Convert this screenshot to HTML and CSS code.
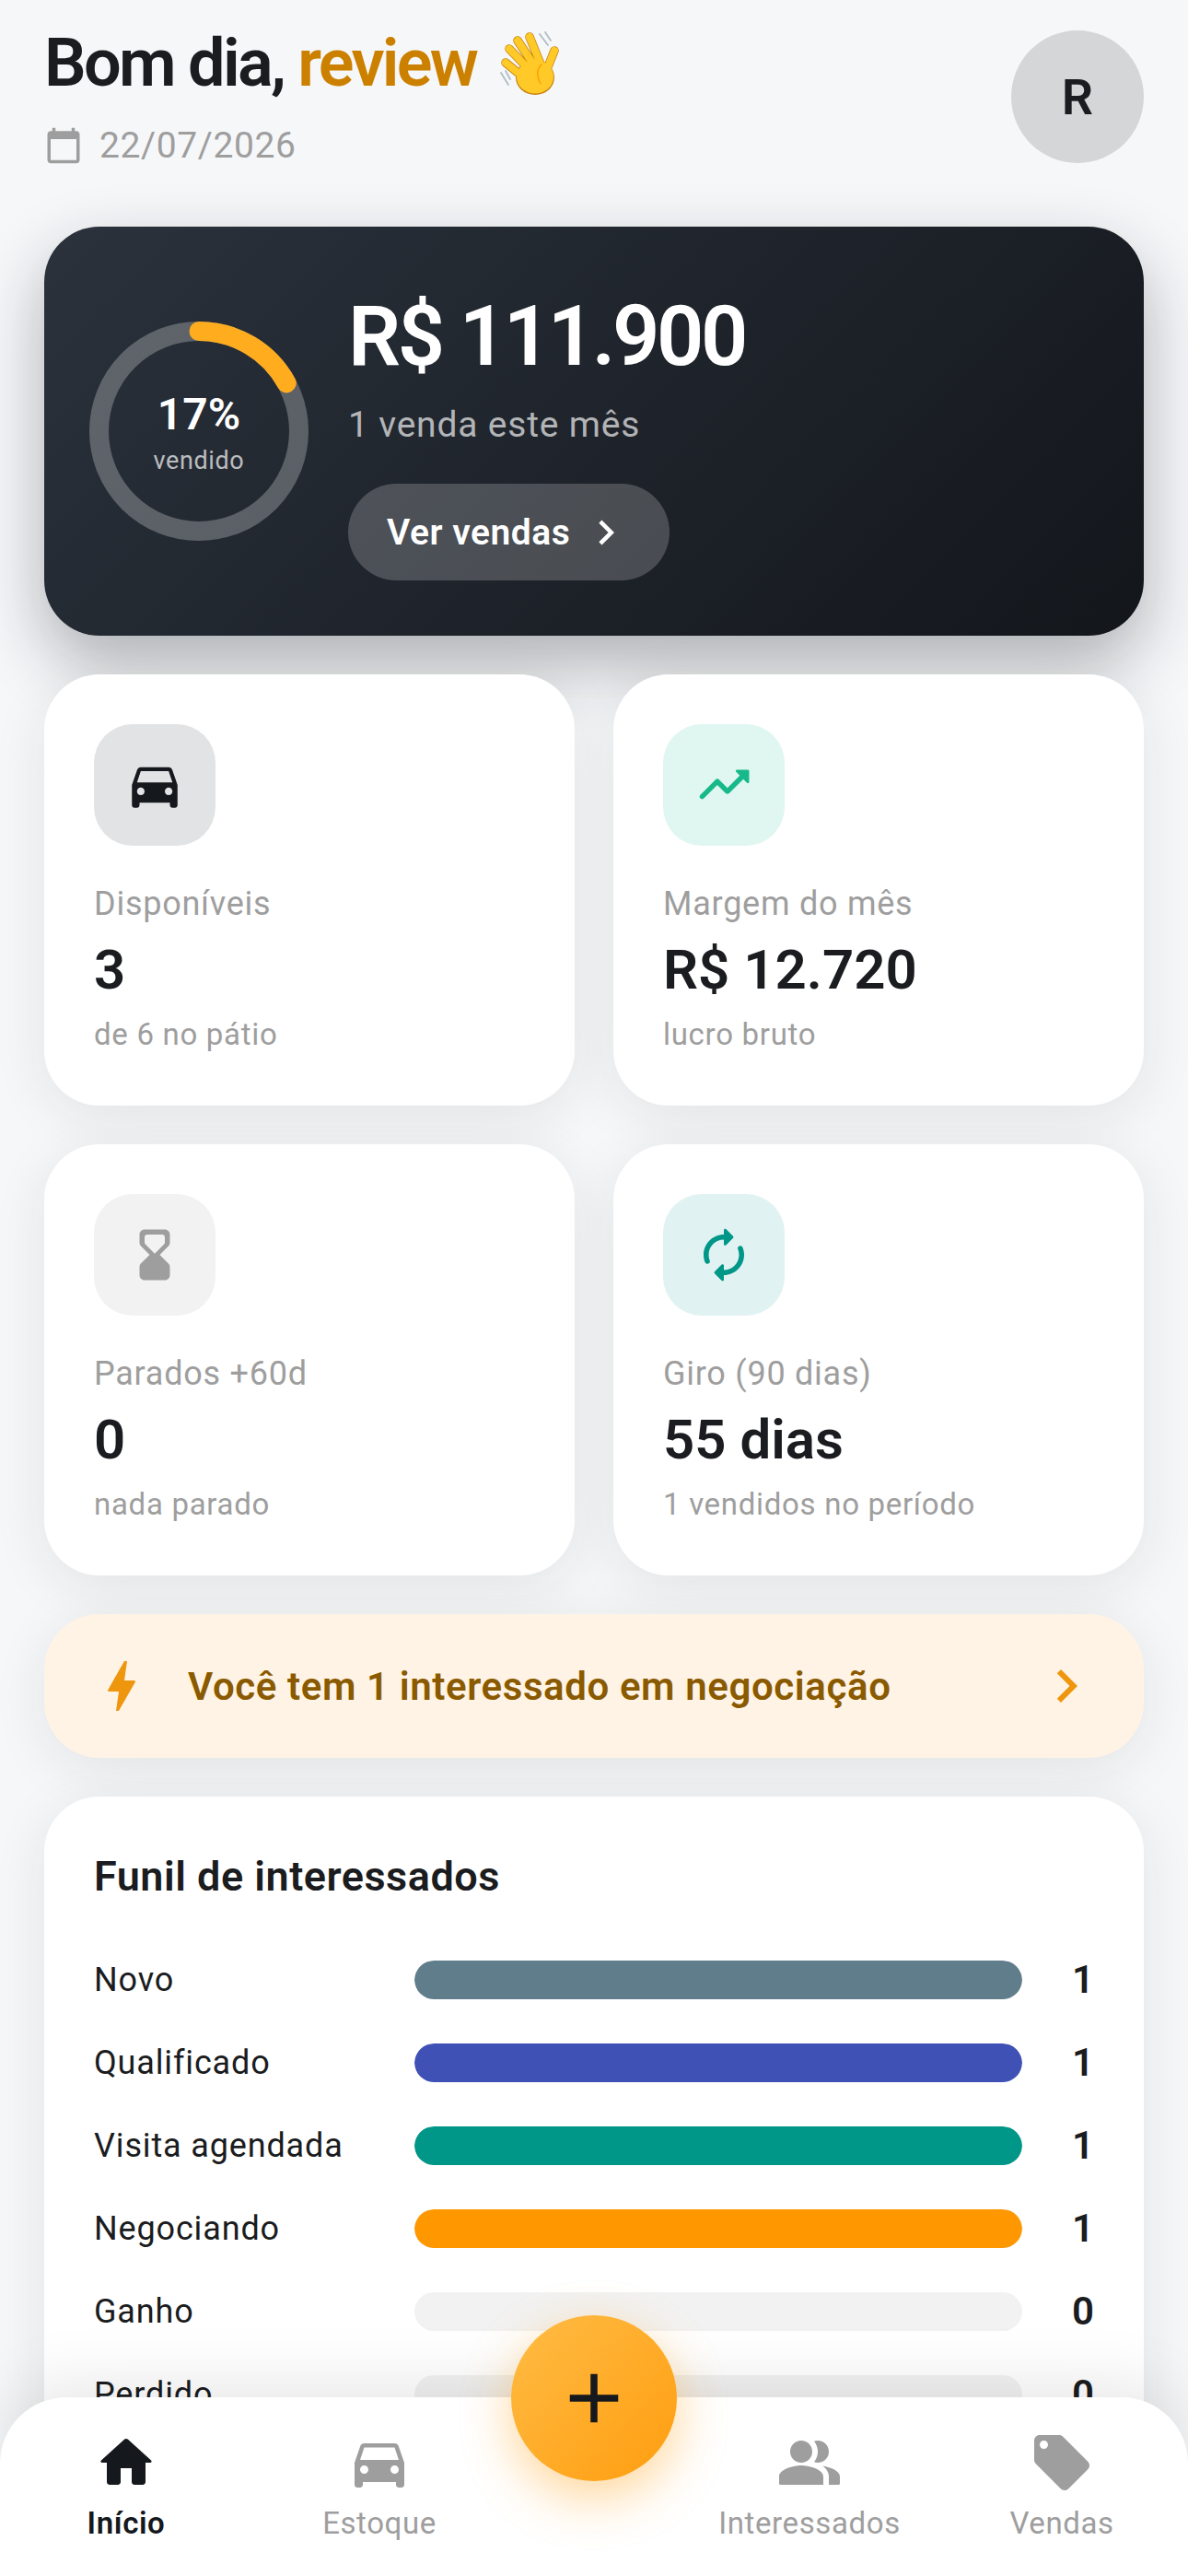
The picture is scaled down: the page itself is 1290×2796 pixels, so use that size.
FILE: index.html
```html
<!DOCTYPE html>
<html lang="pt-BR">
<head>
<meta charset="utf-8">
<title>Início</title>
<link rel="stylesheet" href="styles.css">
</head>
<body>
<div class="screen">
  <main class="content">
    <header class="top">
      <div>
        <h1 class="greet">Bom dia, <span class="greet-name">review</span> <svg class="wave" viewBox="0 0 65 69"><g fill="none" stroke-linecap="round"><g stroke="#C77F0A" stroke-width="9.5"><path d="M33 6 46 38M20 10 40 40M11 19 36 45M7 34 29 52M60 21 50 46"/></g><ellipse cx="39" cy="50" rx="21" ry="19" fill="#C77F0A"/><g stroke="#FFCA28" stroke-width="8"><path d="M33 6 46 38M20 10 40 40M11 19 36 45M7 34 29 52M60 21 50 46"/></g><ellipse cx="39" cy="49.500" rx="20" ry="18" fill="#FFCA28"/><path d="M44 3 53 15M50 1 56 10M2 45 10 58M7 43 12 52" stroke="#B0BEC5" stroke-width="1.800"/><path d="M46 36Q38 44 45 57" stroke="#FFA000" stroke-width="1.500"/></g></svg></h1>
        <div class="date">
          <svg class="ic-date" viewBox="0 0 24 24"><path d="M20 3h-1V1h-2v2H7V1H5v2H4c-1.100 0-2 .9-2 2v16c0 1.100.9 2 2 2h16c1.100 0 2-.9 2-2V5c0-1.100-.9-2-2-2zm0 18H4V8h16v13z"/></svg>
          <span>22/07/2026</span>
        </div>
      </div>
      <div class="avatar">R</div>
    </header>

    <section class="hero">
      <div class="ring">
        <svg class="ring-svg" viewBox="0 0 240 240">
          <circle class="ring-track" cx="120" cy="120" r="108.500"/>
          <circle class="ring-value" cx="120" cy="120" r="108.500" stroke-dasharray="115.900 681.700" transform="rotate(-90 120 120)"/>
        </svg>
        <div class="ring-label">
          <div class="ring-pct">17%</div>
          <div class="ring-sub">vendido</div>
        </div>
      </div>
      <div class="hero-body">
        <div class="hero-amount">R$ 111.900</div>
        <div class="hero-sub">1 venda este mês</div>
        <div class="hero-btn">
          <span>Ver vendas</span>
          <svg class="ic-chev-sm" viewBox="0 0 24 24"><path d="M10 6 8.590 7.410 13.170 12l-4.580 4.590L10 18l6-6z"/></svg>
        </div>
      </div>
    </section>

    <section class="stats">
      <article class="card">
        <div class="icon-box box-dark"><svg class="ic" viewBox="0 0 24 24"><path fill="#15181D" d="M18.920 6.010C18.720 5.420 18.160 5 17.500 5h-11c-.66 0-1.210.42-1.420 1.010L3 12v8c0 .55.45 1 1 1h1c.55 0 1-.45 1-1v-1h12v1c0 .55.45 1 1 1h1c.55 0 1-.45 1-1v-8l-2.080-5.990zM6.500 16c-.83 0-1.500-.67-1.500-1.500S5.670 13 6.500 13s1.500.67 1.500 1.500S7.330 16 6.500 16zm11 0c-.83 0-1.500-.67-1.500-1.500s.67-1.500 1.500-1.500 1.500.67 1.500 1.500-.67 1.500-1.500 1.500zM5 11l1.500-4.500h11L19 11H5z"/></svg></div>
        <div class="card-label">Disponíveis</div>
        <div class="card-value">3</div>
        <div class="card-sub">de 6 no pátio</div>
      </article>
      <article class="card">
        <div class="icon-box box-green"><svg class="ic" viewBox="0 0 24 24"><path fill="#17B98A" d="M16.850 6.850l1.440 1.440-4.880 4.880-3.290-3.290c-.39-.39-1.020-.39-1.410 0l-6 6.010c-.39.39-.39 1.020 0 1.410.39.39 1.020.39 1.410 0L9.410 12l3.290 3.290c.39.39 1.020.39 1.410 0l5.590-5.580 1.440 1.440c.31.31.85.09.85-.35V6.500c.01-.28-.21-.5-.49-.5h-4.290c-.45 0-.67.54-.36.85z"/></svg></div>
        <div class="card-label">Margem do mês</div>
        <div class="card-value">R$ 12.720</div>
        <div class="card-sub">lucro bruto</div>
      </article>
      <article class="card">
        <div class="icon-box box-grey"><svg class="ic" viewBox="0 0 24 24"><path fill="#9E9E9E" d="M16 22c1.100 0 2-.9 2-2l-.01-3.180c0-.53-.21-1.030-.58-1.410L14 12l3.410-3.430c.37-.37.58-.88.58-1.410L18 4c0-1.100-.9-2-2-2H8c-1.100 0-2 .9-2 2v3.160c0 .53.21 1.040.58 1.420L10 12l-3.410 3.400c-.38.38-.59.89-.59 1.420V20c0 1.100.9 2 2 2h8zM8 7.090V5c0-.55.45-1 1-1h6c.55 0 1 .45 1 1v2.090c0 .27-.11.52-.29.71L12 11.500 8.290 7.790c-.18-.18-.29-.44-.29-.7z"/></svg></div>
        <div class="card-label">Parados +60d</div>
        <div class="card-value">0</div>
        <div class="card-sub">nada parado</div>
      </article>
      <article class="card">
        <div class="icon-box box-teal"><svg class="ic" viewBox="0 0 24 24"><path fill="#009688" d="M12 6v1.790c0 .45.54.67.85.35l2.790-2.790c.2-.2.2-.51 0-.71l-2.790-2.790c-.31-.31-.85-.09-.85.36V4c-4.420 0-8 3.580-8 8 0 1.040.2 2.040.57 2.950.27.67 1.130.85 1.640.34.27-.27.38-.68.23-1.040C6.150 13.560 6 12.790 6 12c0-3.310 2.690-6 6-6zm5.790 2.710c-.27.27-.38.69-.23 1.040.28.7.44 1.460.44 2.250 0 3.310-2.690 6-6 6v-1.790c0-.45-.54-.67-.85-.35l-2.790 2.790c-.2.2-.2.51 0 .71l2.790 2.790c.31.31.85.09.85-.35V20c4.420 0 8-3.580 8-8 0-1.040-.2-2.040-.57-2.950-.27-.67-1.130-.85-1.640-.34z"/></svg></div>
        <div class="card-label">Giro (90 dias)</div>
        <div class="card-value">55 dias</div>
        <div class="card-sub">1 vendidos no período</div>
      </article>
    </section>

    <section class="banner">
      <svg class="ic-banner" viewBox="0 0 24 24"><path fill="#ED960E" d="M11 21h-1l1-7H7.500c-.58 0-.57-.32-.38-.66.19-.34.05-.08.07-.12C8.480 10.940 10.420 7.540 13 3h1l-1 7h3.500c.49 0 .56.33.47.51l-.07.15C12.960 17.550 11 21 11 21z"/></svg>
      <span class="banner-text">Você tem 1 interessado em negociação</span>
      <svg class="ic-banner" viewBox="0 0 24 24"><path fill="#ED960E" d="M10 6 8.590 7.410 13.170 12l-4.580 4.590L10 18l6-6z"/></svg>
    </section>

    <section class="funnel">
      <h2 class="funnel-title">Funil de interessados</h2>
      <div class="funnel-rows">
        <div class="f-row"><span class="f-label">Novo</span><div class="f-track"><div class="f-bar bar-slate"></div></div><span class="f-num">1</span></div>
        <div class="f-row"><span class="f-label">Qualificado</span><div class="f-track"><div class="f-bar bar-indigo"></div></div><span class="f-num">1</span></div>
        <div class="f-row"><span class="f-label">Visita agendada</span><div class="f-track"><div class="f-bar bar-teal"></div></div><span class="f-num">1</span></div>
        <div class="f-row"><span class="f-label">Negociando</span><div class="f-track"><div class="f-bar bar-orange"></div></div><span class="f-num">1</span></div>
        <div class="f-row"><span class="f-label">Ganho</span><div class="f-track"></div><span class="f-num">0</span></div>
        <div class="f-row"><span class="f-label">Perdido</span><div class="f-track"></div><span class="f-num">0</span></div>
      </div>
    </section>
  </main>

  <nav class="nav">
    <div class="nav-item nav-active">
      <svg class="ic-nav" viewBox="0 0 24 24"><path d="M10 19v-5h4v5c0 .55.45 1 1 1h3c.55 0 1-.45 1-1v-7h1.700c.46 0 .68-.57.33-.87L12.670 3.600c-.38-.34-.96-.34-1.340 0l-8.360 7.530c-.34.3-.13.87.33.87H5v7c0 .55.45 1 1 1h3c.55 0 1-.45 1-1z"/></svg>
      <span>Início</span>
    </div>
    <div class="nav-item">
      <svg class="ic-nav" viewBox="0 0 24 24"><path d="M18.920 6.010C18.720 5.420 18.160 5 17.500 5h-11c-.66 0-1.210.42-1.420 1.010L3 12v8c0 .55.45 1 1 1h1c.55 0 1-.45 1-1v-1h12v1c0 .55.45 1 1 1h1c.55 0 1-.45 1-1v-8l-2.080-5.990zM6.500 16c-.83 0-1.500-.67-1.500-1.500S5.670 13 6.500 13s1.500.67 1.500 1.500S7.330 16 6.500 16zm11 0c-.83 0-1.500-.67-1.500-1.500s.67-1.500 1.500-1.500 1.500.67 1.500 1.500-.67 1.500-1.500 1.500zM5 11l1.500-4.500h11L19 11H5z"/></svg>
      <span>Estoque</span>
    </div>
    <div class="nav-gap"></div>
    <div class="nav-item">
      <svg class="ic-nav" viewBox="0 0 24 24"><path d="M16.670 13.130C18.040 14.060 19 15.320 19 17v3h3.500c.28 0 .5-.22.5-.5V17c0-2.180-3.570-3.470-6.330-3.870zM15 12c2.210 0 4-1.790 4-4s-1.790-4-4-4c-.47 0-.91.1-1.330.24C14.500 5.270 15 6.580 15 8s-.5 2.730-1.330 3.760c.42.14.86.24 1.330.24zM9 12c2.210 0 4-1.790 4-4s-1.790-4-4-4-4 1.790-4 4 1.790 4 4 4zM9 13c-2.670 0-8 1.340-8 4v2.500c0 .28.22.5.5.5H17v-3c0-2.660-5.330-4-8-4z"/></svg>
      <span>Interessados</span>
    </div>
    <div class="nav-item">
      <svg class="ic-nav" viewBox="0 0 24 24"><path d="M21.410 11.580l-9-9C12.050 2.220 11.550 2 11 2H4c-1.100 0-2 .9-2 2v7c0 .55.22 1.050.59 1.420l9 9c.36.36.86.58 1.410.58s1.050-.22 1.410-.59l7-7c.37-.36.59-.86.59-1.410s-.23-1.060-.59-1.420zM5.500 7C4.670 7 4 6.330 4 5.500S4.670 4 5.500 4 7 4.670 7 5.500 6.330 7 5.500 7z"/></svg>
      <span>Vendas</span>
    </div>
    <div class="fab"><svg class="ic-fab" viewBox="0 0 24 24"><path d="M19 13h-6v6h-2v-6H5v-2h6V5h2v6h6v2z"/></svg></div>
  </nav>
</div>
</body>
</html>
```
FILE: styles.css
```css
* { box-sizing: border-box; margin: 0; padding: 0; }
html, body { width: 1290px; height: 2796px; overflow: hidden; }
body { font-family: Roboto, "Noto Sans", sans-serif; color: #1A1C20; background: #F6F7F9; }
.screen { position: relative; width: 1290px; height: 2796px; overflow: hidden; }
.content { padding: 33px 48px 0; display: flex; flex-direction: column; }

.top { display: flex; justify-content: space-between; align-items: flex-start; height: 213px; }
.greet { font-size: 72px; line-height: 72px; font-weight: 600; letter-spacing: -2.7px; }
.greet-name { color: #CC8000; }
.wave { width: 65px; height: 69px; vertical-align: -10px; margin-left: 9px; }
.date { display: flex; align-items: center; gap: 18px; margin-top: 32px; font-size: 39px; line-height: 42px; color: #9E9E9E; letter-spacing: 0.6px; }
.ic-date { width: 42px; height: 42px; fill: #9E9E9E; }
.avatar { width: 144px; height: 144px; border-radius: 50%; background: #D5D6D8; display: flex; align-items: center; justify-content: center; font-size: 54px; font-weight: 600; }

.hero { display: flex; align-items: center; gap: 42px; padding: 60px 48px; border-radius: 60px; background: linear-gradient(135deg, #2B323C 0%, #13161B 100%); box-shadow: 0 30px 72px rgba(20, 24, 30, 0.32); color: #FFF; }
.ring { position: relative; width: 240px; height: 240px; flex: none; }
.ring-svg { display: block; width: 240px; height: 240px; }
.ring-track { fill: none; stroke: rgba(255, 255, 255, 0.26); stroke-width: 21; }
.ring-value { fill: none; stroke: #FFAD1F; stroke-width: 21; stroke-linecap: round; }
.ring-label { position: absolute; inset: 6px 0 0; display: flex; flex-direction: column; align-items: center; justify-content: center; }
.ring-pct { font-size: 48px; line-height: 48px; font-weight: 600; }
.ring-sub { margin-top: 10px; font-size: 27px; line-height: 33px; letter-spacing: 0.6px; color: rgba(255, 255, 255, 0.7); }
.hero-body { display: flex; flex-direction: column; align-items: flex-start; }
.hero-amount { font-size: 90px; line-height: 120px; font-weight: 600; letter-spacing: -3.4px; }
.hero-sub { margin-top: 8px; font-size: 39px; line-height: 54px; letter-spacing: 0.8px; color: rgba(255, 255, 255, 0.66); }
.hero-btn { margin-top: 37px; height: 105px; padding: 0 42px; display: flex; align-items: center; gap: 12px; border-radius: 54px; background: rgba(255, 255, 255, 0.2); font-size: 39px; font-weight: 600; letter-spacing: 0.5px; }
.ic-chev-sm { width: 54px; height: 54px; fill: #FFF; }

.stats { display: grid; grid-template-columns: 1fr 1fr; gap: 42px; margin-top: 42px; }
.card { padding: 54px 54px 56px; background: #FFF; border-radius: 60px; box-shadow: 0 12px 60px rgba(26, 28, 32, 0.09); }
.icon-box { width: 132px; height: 132px; border-radius: 42px; display: flex; align-items: center; justify-content: center; }
.box-dark { background: #E2E3E5; }
.box-green { background: #E0F6F0; }
.box-grey { background: #F2F2F2; }
.box-teal { background: #E0F2F1; }
.ic { width: 66px; height: 66px; }
.card-label { margin-top: 39px; font-size: 36px; line-height: 48px; letter-spacing: 0.75px; color: #9E9E9E; }
.card-value { margin-top: 12px; font-size: 60px; line-height: 72px; font-weight: 600; }
.card-sub { margin-top: 13px; font-size: 33px; line-height: 42px; letter-spacing: 0.7px; color: #9E9E9E; }

.banner { display: flex; align-items: center; gap: 36px; height: 156px; margin-top: 42px; padding: 0 48px; border-radius: 60px; background: #FFF3E5; box-shadow: 0 12px 60px rgba(26, 28, 32, 0.09); }
.ic-banner { width: 72px; height: 72px; flex: none; }
.banner-text { flex: 1; font-size: 42px; font-weight: 600; letter-spacing: 0.6px; color: #8A5A00; }

.funnel { margin-top: 42px; padding: 54px; background: #FFF; border-radius: 60px; box-shadow: 0 12px 60px rgba(26, 28, 32, 0.09); }
.funnel-title { font-size: 45px; line-height: 66px; font-weight: 600; letter-spacing: 0.5px; }
.funnel-rows { display: flex; flex-direction: column; gap: 48px; margin-top: 57px; }
.f-row { display: grid; grid-template-columns: 348px 660px 78px; align-items: center; height: 42px; }
.f-label { font-size: 36px; line-height: 44px; letter-spacing: 0.85px; }
.f-track { height: 42px; border-radius: 21px; background: #F2F2F2; overflow: hidden; }
.f-bar { width: 100%; height: 100%; border-radius: 21px; }
.bar-slate { background: #607D8B; }
.bar-indigo { background: #3F51B5; }
.bar-teal { background: #009688; }
.bar-orange { background: #FF9800; }
.f-num { text-align: right; font-size: 42px; line-height: 42px; font-weight: 600; }

.nav { position: absolute; left: 0; right: 0; bottom: 0; height: 194px; padding-top: 35px; display: grid; grid-template-columns: 274px 276px 190px 278px 270px; align-items: start; border-radius: 72px 72px 0 0; background: #FFF; box-shadow: 0 -12px 72px rgba(0, 0, 0, 0.1); }
.nav-item { display: flex; flex-direction: column; align-items: center; gap: 9px; font-size: 33px; line-height: 42px; letter-spacing: 0.6px; color: #9E9E9E; }
.ic-nav { display: block; width: 72px; height: 72px; fill: #9E9E9E; }
.nav-active { color: #15181D; font-weight: 600; }
.nav-active .ic-nav { fill: #15181D; }
.fab { position: absolute; left: 555px; top: -89px; width: 180px; height: 180px; border-radius: 50%; display: flex; align-items: center; justify-content: center; background: linear-gradient(135deg, #FFBC45 0%, #FF9D0F 100%); box-shadow: 0 18px 54px rgba(255, 165, 30, 0.45); }
.ic-fab { width: 90px; height: 90px; fill: #15181D; }
```
